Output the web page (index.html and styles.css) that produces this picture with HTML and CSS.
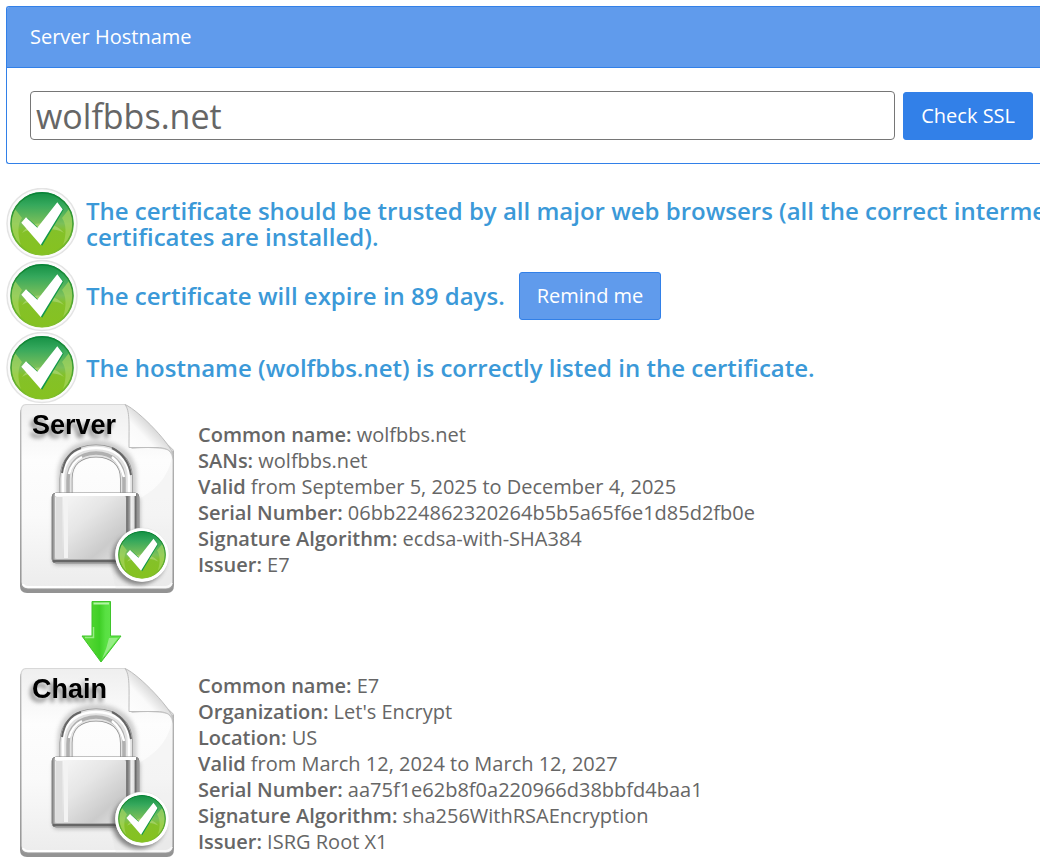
FILE: index.html
```html
<!DOCTYPE html>
<html lang="en">
<head>
<meta charset="utf-8">
<meta name="viewport" content="width=device-width, initial-scale=1">
<title>SSL Checker</title>
<link rel="stylesheet" href="styles.css">
</head>
<body>
<svg class="defs" width="0" height="0" aria-hidden="true">
  <defs>
    <linearGradient id="g-top" x1="0" y1="0" x2="0" y2="1">
      <stop offset="0" stop-color="#149044"/><stop offset=".2" stop-color="#35a85c"/><stop offset=".5" stop-color="#7cc05a"/><stop offset=".62" stop-color="#84c128"/><stop offset="1" stop-color="#86c220"/>
    </linearGradient>
    <linearGradient id="g-rim" x1="0" y1="0" x2="0" y2="1">
      <stop offset="0" stop-color="#078236"/><stop offset=".6" stop-color="#4fa534"/><stop offset="1" stop-color="#86c129"/>
    </linearGradient>
    <linearGradient id="g-page" x1="0" y1="0" x2="0" y2="1">
      <stop offset="0" stop-color="#efefef"/><stop offset=".3" stop-color="#fdfdfd"/><stop offset=".6" stop-color="#fafafa"/><stop offset="1" stop-color="#ececec"/>
    </linearGradient>
    <linearGradient id="g-edge" x1="0" y1="0" x2="0" y2="1">
      <stop offset="0" stop-color="#d8d8d8"/><stop offset="1" stop-color="#9a9a9a"/>
    </linearGradient>
    <linearGradient id="g-fold" x1="0" y1="1" x2="1" y2="0">
      <stop offset="0" stop-color="#ffffff"/><stop offset=".38" stop-color="#fafafa"/><stop offset=".55" stop-color="#dcdcdc"/>
    </linearGradient>
    <linearGradient id="g-body" x1="0" y1="0" x2="1" y2="1">
      <stop offset="0" stop-color="#f8f8f8"/><stop offset=".4" stop-color="#e6e6e6"/><stop offset=".75" stop-color="#cbcbcb"/><stop offset="1" stop-color="#e4e4e4"/>
    </linearGradient>
    <linearGradient id="g-side" x1="0" y1="0" x2="1" y2="0">
      <stop offset="0" stop-color="#777"/><stop offset=".04" stop-color="#c8c8c8"/><stop offset=".84" stop-color="#bbb"/><stop offset=".86" stop-color="#6e6e6e"/><stop offset=".89" stop-color="#9a9a9a"/><stop offset=".91" stop-color="#efefef"/><stop offset=".94" stop-color="#e0e0e0"/><stop offset=".96" stop-color="#6a6a6a"/><stop offset="1" stop-color="#b5b5b5"/>
    </linearGradient>
    <linearGradient id="g-arrow" x1="0" y1="0" x2="1" y2="0">
      <stop offset="0" stop-color="#62dc3a"/><stop offset=".45" stop-color="#3fcf26"/><stop offset=".6" stop-color="#58e042"/><stop offset="1" stop-color="#6ae852"/>
    </linearGradient>
    <filter id="soft" x="-30%" y="-30%" width="160%" height="160%"><feGaussianBlur stdDeviation="2"/></filter>
    <filter id="smooth" x="-10%" y="-10%" width="120%" height="120%"><feGaussianBlur stdDeviation=".6"/></filter>

    <symbol id="check" viewBox="0 1 72 72">
      <circle cx="36" cy="36.500" r="35" fill="#fbfbfb" stroke="#e4e4e4" stroke-width="1.500"/>
      <circle cx="36" cy="36.700" r="31.500" fill="url(#g-top)"/>
      <path d="M6 29 C4 41 8 52 15 58 C11 47 12 36 16 31 L9 22Z M66 29 C68 41 64 52 57 58 C61 47 60 36 56 31 L63 22Z" fill="#a9d761" opacity=".65" filter="url(#smooth)"/>
      <path d="M16 46 C24 33 48 33 58 46 C50 40 24 40 16 46Z" fill="#b4db7c" opacity=".6" filter="url(#smooth)"/>
      <circle cx="36" cy="36.700" r="31" fill="none" stroke="url(#g-rim)" stroke-width="1.500"/>
      <path d="M21.500 31 L32.500 41 L52.500 16.500 L57.800 22.500 L36.200 58.800 L17 37Z" fill="#12984a"/>
      <path d="M20 30.300 L31.300 40.700 L51.300 15.300 L56.700 22.300 L34.700 58 L15.300 35.700Z" fill="#fff"/>
    </symbol>

    <symbol id="locked-page" viewBox="0 1 192 192">
      <path d="M20 4 H118 L168 48 V182 Q168 190 161 190 H21 Q14 190 14 183 V10 Q14 4 20 4Z" fill="#666" opacity=".7" filter="url(#smooth)"/>
      <path d="M21 1.500 H119 L167 47 V179 Q167 186 160 186 H22 Q15 186 15 179 V8 Q15 1.500 21 1.500Z" fill="url(#g-page)" stroke="url(#g-edge)" stroke-width="1.200"/>
      <path d="M17 181 Q18 184 23 184 H159 Q164 184 166 180" fill="none" stroke="#fff" stroke-width="2"/>
      <path d="M121 0 L171 49 V0Z" fill="#fff"/>
      <path d="M125 45 H158 Q164 46 167 57 V48 Q148 43 126 46Z" fill="#aaa" opacity=".5" filter="url(#smooth)"/>
      <path d="M119 1.500 C124 8 123 20 123 44.500 H151 C159 44.500 164 47 167 52 C167 44 134 8 119 1.500Z" fill="url(#g-fold)" stroke="#bdbdbd" stroke-width="1"/>
      <path d="M166 53 C161 88 125 103 91 111 L110 186 H160 Q166 186 166 180Z" fill="#ddd" opacity=".22"/>
      <path d="M58 93 V73 C58 54 71 44 90 44 C109 44 124 54 124 73 V93" fill="none" stroke="#777" stroke-width="13" opacity=".35" filter="url(#soft)"/>
      <path d="M60 93 V76 C60 58 72 48 90 48 C108 48 120.500 58 120.500 76 V93" fill="none" stroke="#909090" stroke-width="13"/>
      <path d="M60 93 V76 C60 58 72 48 90 48 C108 48 120.500 58 120.500 76 V93" fill="none" stroke="#e2e2e2" stroke-width="11.500"/>
      <path d="M62 93 V77 C62 60 74 50 90 50 C106 50 118 60 118 77 V93" fill="none" stroke="#b0b0b0" stroke-width="3.500" filter="url(#smooth)"/>
      <path d="M57 93 V75 C57 55 72 45 90 45 C108 45 123 55 123 75 V93" fill="none" stroke="#fff" stroke-width="2.500"/>
      <path d="M56 70 Q59 50 75 45 M106 45 Q122 53 125 72" fill="none" stroke="#666" stroke-width="2" filter="url(#smooth)"/>
      <path d="M63 71 Q66 59 76 54 M106 54 Q115 61 118 74" fill="none" stroke="#fff" stroke-width="2.500"/>
      <rect x="47" y="94" width="87" height="68" rx="4" fill="#666" opacity=".45" filter="url(#soft)"/>
      <rect x="46" y="90" width="87" height="70" rx="4" fill="url(#g-side)" stroke="#888"/>
      <rect x="49" y="93" width="71" height="63" rx="2" fill="url(#g-body)"/>
      <path d="M53 94 V155" stroke="#dedede" stroke-width="7"/>
      <path d="M60 94 V155" stroke="#f3f3f3" stroke-width="4"/>
      <path d="M49 91.500 H130" stroke="#fff" stroke-width="3"/>
      <path d="M47 158 H120" stroke="#666" stroke-width="2.500"/>
      <circle cx="133" cy="155" r="27" fill="#444" opacity=".6" filter="url(#soft)"/>
      <circle cx="136" cy="152.500" r="26" fill="#fff"/>
      <use href="#check" x="109" y="125" width="54" height="54"/>
      <circle cx="136" cy="152" r="25.500" fill="none" stroke="#fff" stroke-width="2.500"/>
    </symbol>
  </defs>
</svg>

<main class="page">
  <form class="panel" action="#">
    <label class="panel-title" for="hostname">Server Hostname</label>
    <div class="panel-body">
      <input class="host" id="hostname" type="text" value="wolfbbs.net">
      <button class="btn btn-primary" type="submit">Check SSL</button>
    </div>
  </form>

  <section class="results">
    <div class="result">
      <svg class="tick" aria-hidden="true"><use href="#check"/></svg>
      <h3 class="message">The certificate should be trusted by all major web browsers (all the correct intermediate<br>certificates are installed).</h3>
    </div>
    <div class="result">
      <svg class="tick" aria-hidden="true"><use href="#check"/></svg>
      <h3 class="message">The certificate will expire in 89 days.</h3>
      <button class="btn btn-remind" type="button">Remind me</button>
    </div>
    <div class="result">
      <svg class="tick" aria-hidden="true"><use href="#check"/></svg>
      <h3 class="message">The hostname (wolfbbs.net) is correctly listed in the certificate.</h3>
    </div>
  </section>

  <section class="chain">
    <article class="cert">
      <svg class="doc" viewBox="0 0 192 192" role="img" aria-label="Server certificate">
        <use href="#locked-page"/>
        <text class="doc-name" x="26" y="30">Server</text>
      </svg>
      <div class="details">
        <div><b>Common name:</b> wolfbbs.net</div>
        <div><b>SANs:</b> wolfbbs.net</div>
        <div><b>Valid</b> from September 5, 2025 to December 4, 2025</div>
        <div><b>Serial Number:</b> 06bb224862320264b5b5a65f6e1d85d2fb0e</div>
        <div><b>Signature Algorithm:</b> ecdsa-with-SHA384</div>
        <div><b>Issuer:</b> E7</div>
      </div>
    </article>
    <svg class="arrow" viewBox="0 0 192 72" aria-hidden="true">
      <path d="M86 5.500 H104.500 V40 H115 L95 66 L76 40 H86Z" fill="url(#g-arrow)" stroke="#3fc42b" stroke-width="1"/>
      <path d="M87.500 7.500 H103" stroke="#b4f5a6" stroke-width="2"/>
      <path d="M79 41.500 H87.500 V31" fill="none" stroke="#98ec85" stroke-width="1.500"/>
      <path d="M103 32 V42 H112 L96 63 Q101 52 103 42Z" fill="#b6f3a7" opacity=".65"/>
    </svg>
    <article class="cert">
      <svg class="doc" viewBox="0 0 192 192" role="img" aria-label="Chain certificate">
        <use href="#locked-page"/>
        <text class="doc-name" x="26" y="30">Chain</text>
      </svg>
      <div class="details">
        <div><b>Common name:</b> E7</div>
        <div><b>Organization:</b> Let's Encrypt</div>
        <div><b>Location:</b> US</div>
        <div><b>Valid</b> from March 12, 2024 to March 12, 2027</div>
        <div><b>Serial Number:</b> aa75f1e62b8f0a220966d38bbfd4baa1</div>
        <div><b>Signature Algorithm:</b> sha256WithRSAEncryption</div>
        <div><b>Issuer:</b> ISRG Root X1</div>
      </div>
    </article>
  </section>
</main>
</body>
</html>
```

FILE: styles.css
```css
* { box-sizing: border-box; }

body {
  margin: 0;
  overflow: hidden;
  background: #fff;
  color: #666;
  font: 400 20px/26px "Open Sans", "Noto Sans", sans-serif;
}

.defs { position: absolute; }

.page {
  padding: 6px 0 0 6px;
  overflow: hidden;
}

.panel {
  border: 1px solid #3280e8;
  border-right: 0;
  border-radius: 3px 0 0 3px;
  overflow: hidden;
}

.panel-title {
  display: block;
  padding: 17px 23px;
  border-bottom: 1px solid #3280e8;
  background: #609bec;
  color: #fff;
}

.panel-body {
  display: flex;
  align-items: flex-end;
  gap: 8px;
  padding: 23px 7px 23px 23px;
}

.host {
  flex: 1;
  min-width: 0;
  height: 49px;
  padding: 0 5px;
  border: 1px solid #767676;
  border-radius: 4px;
  background: #fff;
  color: #666;
  font: 400 34px/46px "Open Sans", "Noto Sans", sans-serif;
}

.btn {
  flex: none;
  height: 48px;
  padding: 0 17px;
  border: 1px solid #3280e8;
  border-radius: 3px;
  color: #fff;
  font: inherit;
  white-space: nowrap;
}

.btn-primary { background: #3280e8; }
.btn-remind { margin-left: 6px; background: #609bec; }

.results { padding-top: 24px; }

.result {
  display: flex;
  align-items: center;
  gap: 8px;
}

.tick {
  flex: none;
  width: 72px;
  height: 72px;
}

.message {
  margin: 0;
  color: #3b99d8;
  font-size: 24px;
  font-weight: 600;
  line-height: 26px;
  white-space: nowrap;
}

.cert {
  display: flex;
  align-items: center;
}

.doc {
  flex: none;
  width: 192px;
  height: 192px;
}

.doc-name {
  fill: #000;
  font: 700 27px "Liberation Sans", Arial, sans-serif;
  filter: drop-shadow(-3px 4px 2px rgba(60, 60, 60, .6));
}

.arrow {
  display: block;
  width: 192px;
  height: 72px;
}

.details b { font-weight: 600; }
```
